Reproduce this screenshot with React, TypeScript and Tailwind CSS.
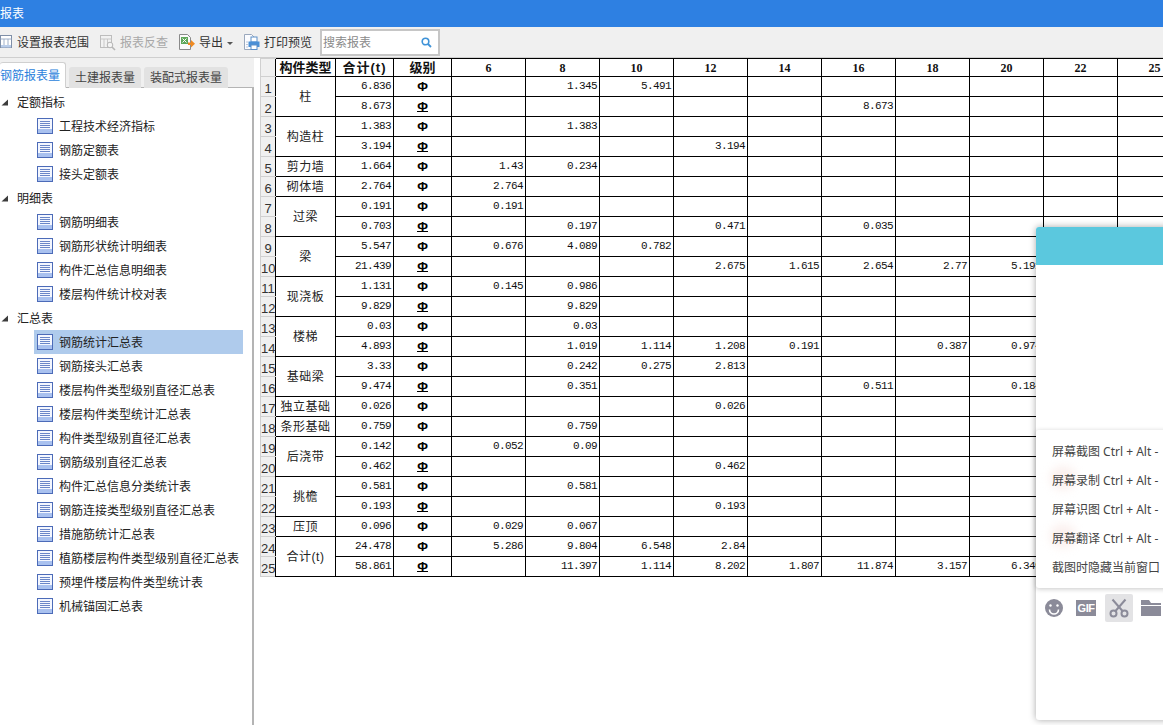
import React from "react";

const font = { fontFamily: '"Liberation Sans", "Noto Sans CJK SC", sans-serif' };

const columns = ["6", "8", "10", "12", "14", "16", "18", "20", "22", "25"];

type Row = { n: number; label?: string; span?: number; total: string; bar: boolean; v: Record<string, string> };

const rows: Row[] = [
  { n: 1, label: "柱", span: 2, total: "6.836", bar: false, v: { "8": "1.345", "10": "5.491" } },
  { n: 2, total: "8.673", bar: true, v: { "16": "8.673" } },
  { n: 3, label: "构造柱", span: 2, total: "1.383", bar: false, v: { "8": "1.383" } },
  { n: 4, total: "3.194", bar: true, v: { "12": "3.194" } },
  { n: 5, label: "剪力墙", span: 1, total: "1.664", bar: false, v: { "6": "1.43", "8": "0.234" } },
  { n: 6, label: "砌体墙", span: 1, total: "2.764", bar: false, v: { "6": "2.764" } },
  { n: 7, label: "过梁", span: 2, total: "0.191", bar: false, v: { "6": "0.191" } },
  { n: 8, total: "0.703", bar: true, v: { "8": "0.197", "12": "0.471", "16": "0.035" } },
  { n: 9, label: "梁", span: 2, total: "5.547", bar: false, v: { "6": "0.676", "8": "4.089", "10": "0.782" } },
  { n: 10, total: "21.439", bar: true, v: { "12": "2.675", "14": "1.615", "16": "2.654", "18": "2.77", "20": "5.191" } },
  { n: 11, label: "现浇板", span: 2, total: "1.131", bar: false, v: { "6": "0.145", "8": "0.986" } },
  { n: 12, total: "9.829", bar: true, v: { "8": "9.829" } },
  { n: 13, label: "楼梯", span: 2, total: "0.03", bar: false, v: { "8": "0.03" } },
  { n: 14, total: "4.893", bar: true, v: { "8": "1.019", "10": "1.114", "12": "1.208", "14": "0.191", "18": "0.387", "20": "0.974" } },
  { n: 15, label: "基础梁", span: 2, total: "3.33", bar: false, v: { "8": "0.242", "10": "0.275", "12": "2.813" } },
  { n: 16, total: "9.474", bar: true, v: { "8": "0.351", "16": "0.511", "20": "0.184" } },
  { n: 17, label: "独立基础", span: 1, total: "0.026", bar: false, v: { "12": "0.026" } },
  { n: 18, label: "条形基础", span: 1, total: "0.759", bar: false, v: { "8": "0.759" } },
  { n: 19, label: "后浇带", span: 2, total: "0.142", bar: false, v: { "6": "0.052", "8": "0.09" } },
  { n: 20, total: "0.462", bar: true, v: { "12": "0.462" } },
  { n: 21, label: "挑檐", span: 2, total: "0.581", bar: false, v: { "8": "0.581" } },
  { n: 22, total: "0.193", bar: true, v: { "12": "0.193" } },
  { n: 23, label: "压顶", span: 1, total: "0.096", bar: false, v: { "6": "0.029", "8": "0.067" } },
  { n: 24, label: "合计(t)", span: 2, total: "24.478", bar: false, v: { "6": "5.286", "8": "9.804", "10": "6.548", "12": "2.84" } },
  { n: 25, total: "58.861", bar: true, v: { "8": "11.397", "10": "1.114", "12": "8.202", "14": "1.807", "16": "11.874", "18": "3.157", "20": "6.349" } },
];

const tree: { title: string; items: string[] }[] = [
  { title: "定额指标", items: ["工程技术经济指标", "钢筋定额表", "接头定额表"] },
  { title: "明细表", items: ["钢筋明细表", "钢筋形状统计明细表", "构件汇总信息明细表", "楼层构件统计校对表"] },
  {
    title: "汇总表",
    items: [
      "钢筋统计汇总表",
      "钢筋接头汇总表",
      "楼层构件类型级别直径汇总表",
      "楼层构件类型统计汇总表",
      "构件类型级别直径汇总表",
      "钢筋级别直径汇总表",
      "构件汇总信息分类统计表",
      "钢筋连接类型级别直径汇总表",
      "措施筋统计汇总表",
      "植筋楼层构件类型级别直径汇总表",
      "预埋件楼层构件类型统计表",
      "机械锚固汇总表",
    ],
  },
];

function DocIcon() {
  return (
    <svg width="16" height="16" viewBox="0 0 16 16" className="shrink-0">
      <rect x="0.5" y="0.5" width="15" height="15" fill="#f4f7ff" stroke="#4c6bb8" />
      <rect x="1" y="11" width="14" height="4" fill="#a9c1ef" />
      <path d="M3 3.5h10M3 5.5h10M3 7.5h10M3 9.5h10" stroke="#6a86c8" strokeWidth="1" />
    </svg>
  );
}

function Triangle() {
  return (
    <svg width="7" height="7" viewBox="0 0 7 7" className="shrink-0">
      <path d="M7 0.5V6.5H0.5Z" fill="#3c3c3c" />
    </svg>
  );
}

function RangeIcon() {
  return (
    <svg width="16" height="16" viewBox="0 0 16 16" className="shrink-0">
      <rect x="3.5" y="1.5" width="11" height="12" fill="#fff" stroke="#7f8fa8" />
      <path d="M3.5 5h11M7 5v8.5M11 5v8.5" stroke="#9fb0c8" />
      <rect x="4" y="11" width="10" height="2.5" fill="#b9cdea" />
    </svg>
  );
}

function CheckIcon() {
  return (
    <svg width="17" height="17" viewBox="0 0 17 17" className="shrink-0">
      <rect x="1.5" y="1.5" width="11" height="12" fill="#f2f2f2" stroke="#bdbdbd" />
      <path d="M1.5 5h11M5 5v8M8.5 5v8" stroke="#c8c8c8" />
      <circle cx="11" cy="11" r="2.8" fill="#f4f4f4" stroke="#b5b5b5" />
      <path d="M13 13l3 3" stroke="#b5b5b5" strokeWidth="1.6" />
    </svg>
  );
}

function ExportIcon() {
  return (
    <svg width="17" height="18" viewBox="0 0 17 18" className="shrink-0">
      <path d="M1.5 1.5h8l3 3v12h-11z" fill="#fbfbfb" stroke="#8a8a8a" />
      <rect x="3" y="4" width="7" height="7" fill="#5fa85a" />
      <path d="M4.5 5.5l4 4M8.5 5.5l-4 4" stroke="#fff" />
      <path d="M10 9.5h3V7l4 3.8-4 3.8V12h-3z" fill="#ef8a22" />
    </svg>
  );
}

function PrintIcon() {
  return (
    <svg width="17" height="18" viewBox="0 0 17 18" className="shrink-0">
      <path d="M1.5 1.5h7l3 3v12h-10z" fill="#fbfcff" stroke="#9aa8bd" />
      <path d="M3.5 9h1M3.5 11.5h1M3.5 14h1" stroke="#7e93b5" />
      <rect x="8" y="4" width="6" height="5" fill="#fff" stroke="#5c8fc8" />
      <rect x="5.5" y="8.5" width="11" height="5.5" fill="#4a8fd6" />
      <rect x="8" y="12" width="6" height="4.5" fill="#fff" stroke="#5c8fc8" />
    </svg>
  );
}

function SearchIcon() {
  return (
    <svg width="11" height="11" viewBox="0 0 11 11">
      <circle cx="4.5" cy="4.5" r="3.3" fill="none" stroke="#3f93d8" strokeWidth="1.6" />
      <path d="M7 7l3 3" stroke="#3f93d8" strokeWidth="1.8" />
    </svg>
  );
}

function Grade({ bar }: { bar: boolean }) {
  return (
    <span
      className={
        bar
          ? "inline-block w-[11px] h-[10px] font-bold text-[13px] leading-[10px] text-center border-b border-black text-black"
          : "inline-block w-[11px] h-[11px] font-bold text-[13px] leading-[11px] text-center text-black"
      }
      style={{ fontFamily: '"Liberation Sans", sans-serif' }}
    >
      Φ
    </span>
  );
}

function ToolButton({ icon, label, disabled, className }: { icon: React.ReactNode; label: string; disabled?: boolean; className?: string }) {
  return (
    <div className={`flex items-center gap-[4px] ${className ?? ""}`}>
      {icon}
      <span className={disabled ? "pt-[2px] text-[#a8a8a8]" : "pt-[2px] text-[#333]"}>{label}</span>
    </div>
  );
}

export default function App() {
  const data = "text-right pr-[2px] pb-[2px] pt-0 pl-0 align-middle border border-black leading-[14px]";
  const mono = { fontFamily: '"Liberation Mono", monospace', letterSpacing: "-0.6px" };
  return (
    <div className="relative w-[1163px] h-[725px] overflow-hidden bg-white text-[12px] text-[#222]" style={font}>
      <div className="h-[27px] bg-[#2e80e2] flex items-center text-white">报表</div>

      <div className="h-[31px] bg-[#f0f0f0] border-b border-[#cfcfcf] flex items-center relative">
        <ToolButton icon={<RangeIcon />} label="设置报表范围" className="-ml-[3px] w-[102px]" />
        <ToolButton icon={<CheckIcon />} label="报表反查" disabled className="w-[79px]" />
        <ToolButton icon={<ExportIcon />} label="导出" className="" />
        <span className="ml-[4px] mr-[10px] mt-[2px] w-0 h-0 border-x-[3px] border-x-transparent border-t-[3px] border-t-[#555]" />
        <ToolButton icon={<PrintIcon />} label="打印预览" className="" />
        <div className="ml-[8px] w-[120px] h-[27px] border-2 border-[#c6c6c6] bg-white flex items-center justify-between pl-[1px] pr-[6px] text-[#8a8a8a]">
          <span className="pt-[2px]">搜索报表</span>
          <SearchIcon />
        </div>
      </div>

      <div className="flex h-[667px]">
        <aside className="w-[254px] shrink-0 flex flex-col bg-[#f0f0f0]">
          <div className="h-[30px] flex items-end gap-[3px] shrink-0 -mb-[1px] relative">
            <div className="w-[66px] h-[26px] bg-white border border-[#d0d0d0] border-b-white rounded-t-[3px] flex items-center text-[#2b7fdc] pt-[1px] z-10 border-l-0">钢筋报表量</div>
            <div className="w-[72px] h-[21px] bg-[#e2e2e2] rounded-t-[3px] flex items-center justify-center text-[#444]">土建报表量</div>
            <div className="w-[84px] h-[21px] bg-[#e2e2e2] rounded-t-[3px] flex items-center justify-center text-[#444]">装配式报表量</div>
          </div>
          <div className="flex-1 bg-white border-t border-r-2 border-[#b4b4b4] pt-[2px]">
            {tree.map((g) => (
              <div key={g.title}>
                <div className="h-[24px] flex items-center">
                  <span className="w-[17px] flex pl-[1px]">
                    <Triangle />
                  </span>
                  <span className="pt-[2px]">{g.title}</span>
                </div>
                {g.items.map((t) => (
                  <div
                    key={t}
                    className={
                      t === "钢筋统计汇总表"
                        ? "h-[24px] ml-[34px] w-[209px] flex items-center pl-[3px] gap-[6px] bg-[#afcbec]"
                        : "h-[24px] ml-[34px] w-[209px] flex items-center pl-[3px] gap-[6px]"
                    }
                  >
                    <DocIcon />
                    <span className="whitespace-nowrap pt-[2px]">{t}</span>
                  </div>
                ))}
              </div>
            ))}
          </div>
        </aside>

        <main className="flex-1 pl-[6px] min-w-0">
          <table className="table-fixed border-collapse w-[931px] text-[#111]">
            <colgroup>
              <col className="w-[15px]" />
              <col className="w-[60px]" />
              <col className="w-[58px]" />
              <col className="w-[58px]" />
              {columns.map((c) => (
                <col key={c} className="w-[74px]" />
              ))}
            </colgroup>
            <thead>
              <tr className="h-[18px]">
                <th className="p-0 bg-[#f0f0f0] border-y border-l border-[#d0d0d0]" />
                <th className="p-0 border border-black text-[13px] leading-[16px] font-bold whitespace-nowrap">构件类型</th>
                <th className="p-0 border border-black text-[13px] leading-[16px] font-bold whitespace-nowrap tracking-[1px]">合计(t)</th>
                <th className="p-0 border border-black text-[13px] leading-[16px] font-bold">级别</th>
                {columns.map((c) => (
                  <th key={c} className="p-0 border border-black text-[12px] leading-[16px] font-bold" style={{ fontFamily: '"Liberation Serif", serif' }}>
                    {c}
                  </th>
                ))}
              </tr>
            </thead>
            <tbody>
              {rows.map((r) => (
                <tr key={r.n} className="h-[20px]">
                  <td className="p-0 bg-[#f0f0f0] border-y border-l border-[#d0d0d0] text-[13px] leading-[14px] text-center align-bottom text-[#333]">{r.n}</td>
                  {r.label ? (
                    <td rowSpan={r.span} className="p-0 border border-black text-center align-middle whitespace-nowrap tracking-[0.5px] text-[#222]">
                      {r.label}
                    </td>
                  ) : null}
                  <td className={data}>
                    <span className="text-[11px]" style={mono}>{r.total}</span>
                  </td>
                  <td className="p-0 border border-black text-center align-middle leading-[14px]">
                    <Grade bar={r.bar} />
                  </td>
                  {columns.map((c) => (
                    <td key={c} className={data}>
                      <span className="text-[11px]" style={mono}>{r.v[c] ?? ""}</span>
                    </td>
                  ))}
                </tr>
              ))}
            </tbody>
          </table>
        </main>
      </div>

      {/* chat window lying over the sheet */}
      <div className="absolute left-[1036px] top-[227px] w-[160px] h-[493px] bg-white rounded-[3px] shadow-[0_0_7px_rgba(0,0,0,0.35)] flex flex-col">
        <div className="h-[38px] bg-[#5bc8de] rounded-t-[3px] shrink-0" />
        <div className="h-[165px] shrink-0" />
        <div className="h-[158px] shrink-0 bg-white rounded-[3px] shadow-[0_1px_5px_rgba(0,0,0,0.22)] pt-[7px] pl-[16px] flex flex-col text-[#444] whitespace-nowrap relative">
          <div className="absolute left-[14px] top-[36px] w-[26px] h-[24px] rounded-full bg-[#fbf0ee] blur-[5px]" />
          <div className="absolute left-[14px] top-[94px] w-[26px] h-[24px] rounded-full bg-[#fbf0ee] blur-[5px]" />
          {["屏幕截图 Ctrl + Alt -", "屏幕录制 Ctrl + Alt -", "屏幕识图 Ctrl + Alt -", "屏幕翻译 Ctrl + Alt -", "截图时隐藏当前窗口"].map((t) => (
            <div key={t} className="h-[29px] flex items-center relative" style={{ fontFamily: '"Noto Sans", "Noto Sans CJK SC", sans-serif' }}>
              {t}
            </div>
          ))}
        </div>
        <div className="flex items-center pl-[9px] mt-[6px] gap-[13px]">
          <svg width="18" height="18" viewBox="0 0 18 18" className="shrink-0">
            <circle cx="9" cy="9" r="9" fill="#8b8b99" />
            <circle cx="5.5" cy="6.5" r="1.2" fill="#fff" />
            <circle cx="12.5" cy="6.5" r="1.2" fill="#fff" />
            <path d="M4.5 10.5a4.5 4.5 0 0 0 9 0" fill="none" stroke="#fff" strokeWidth="1.6" />
          </svg>
          <div className="w-[20px] h-[16px] bg-[#8b8b99] text-white font-bold text-[11px] leading-[16px] text-center tracking-[-0.5px]">GIF</div>
          <div className="-ml-[4px] -mr-[5px] w-[28px] h-[28px] bg-[#e3e3e5] rounded-[2px] flex items-center justify-center shrink-0">
            <svg width="20" height="20" viewBox="0 0 20 20">
              <circle cx="4.5" cy="15.5" r="3" fill="none" stroke="#8b8b99" strokeWidth="2" />
              <circle cx="15.5" cy="15.5" r="3" fill="none" stroke="#8b8b99" strokeWidth="2" />
              <path d="M6.5 13L16.5 1.5M13.5 13L3.5 1.5" stroke="#8b8b99" strokeWidth="2" />
            </svg>
          </div>
          <svg width="20" height="16" viewBox="0 0 20 16" className="shrink-0">
            <path d="M0 0h8l2 3h10v2H0z" fill="#8b8b99" />
            <path d="M0 6h20v10H0z" fill="#8b8b99" />
          </svg>
        </div>
      </div>
    </div>
  );
}
